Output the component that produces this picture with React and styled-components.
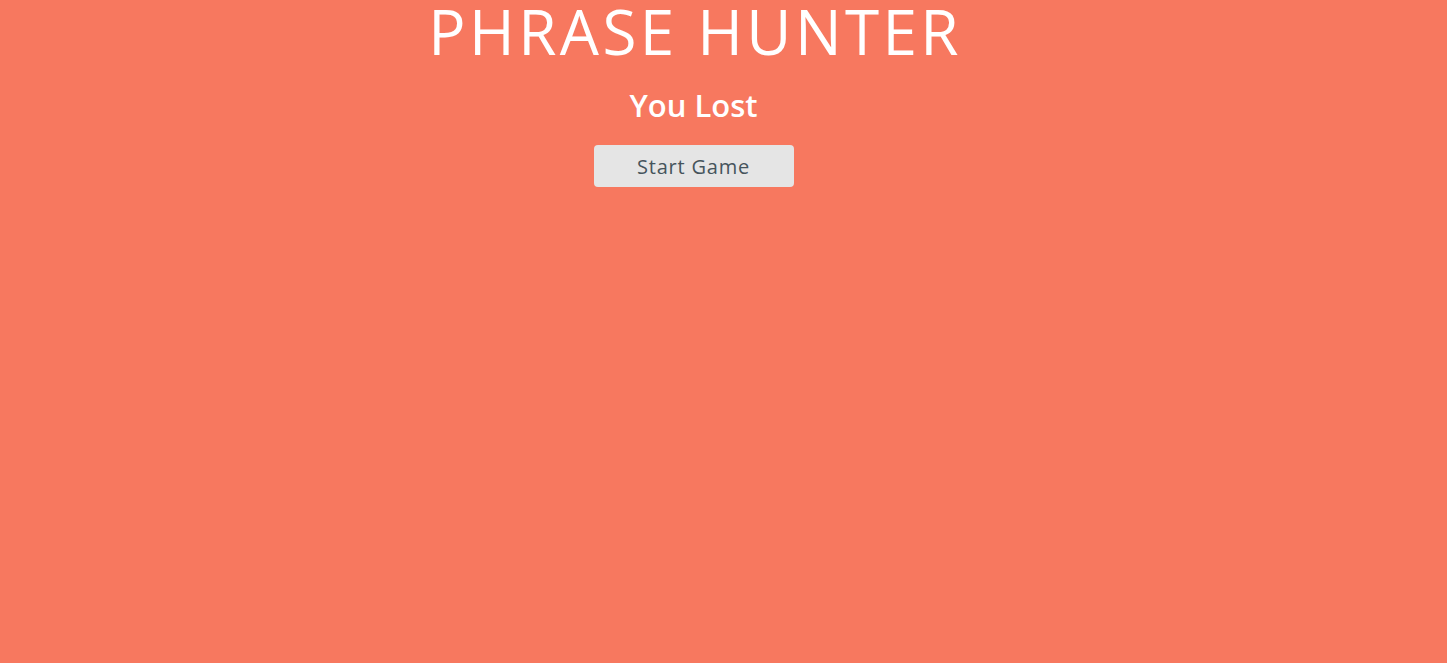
import React from "react";
import styled, { createGlobalStyle } from "styled-components";

const Global = createGlobalStyle`
  html, body { margin: 0; padding: 0; }
  body {
    background: #f7785f;
    font-family: "Open Sans", "Noto Sans", sans-serif;
  }
`;

const Overlay = styled.div`
  min-height: 663px;
  background: #f7785f;
  display: flex;
  flex-direction: column;
  align-items: center;
  padding-right: 60px;
`;

const Title = styled.h2`
  margin: 0;
  color: #fff;
  font-size: 62px;
  font-weight: 400;
  line-height: 62px;
  letter-spacing: 3.4px;
  text-indent: 3.4px;
`;

const Message = styled.h1`
  margin: 23px 0 0;
  color: #fff;
  font-size: 31px;
  font-weight: 600;
  line-height: 40px;
`;

const StartButton = styled.button`
  margin-top: 20px;
  width: 200px;
  height: 42px;
  border: none;
  border-radius: 4px;
  background: #e5e5e5;
  color: #45545c;
  font-family: "Open Sans", "Noto Sans", sans-serif;
  font-size: 20px;
  font-weight: 400;
  letter-spacing: 0.8px;
  cursor: pointer;
`;

export default function App() {
  return (
    <>
      <Global />
      <Overlay>
        <Title>PHRASE HUNTER</Title>
        <Message>You Lost</Message>
        <StartButton>Start Game</StartButton>
      </Overlay>
    </>
  );
}
